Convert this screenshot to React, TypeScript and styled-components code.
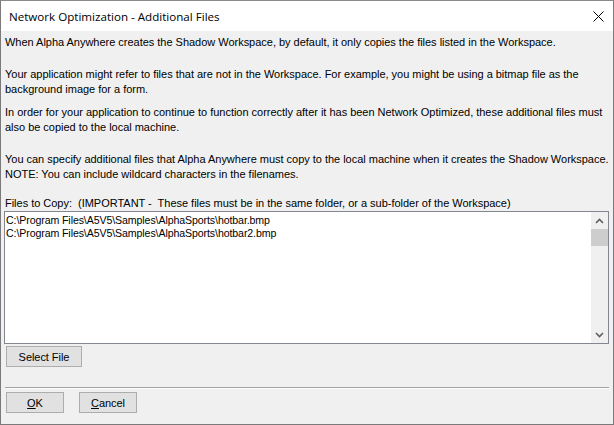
import React from "react";
import styled, { createGlobalStyle } from "styled-components";

const Global = createGlobalStyle`
  html, body { margin: 0; padding: 0; background: #ffffff; }
  * { box-sizing: border-box; }
`;

const Window = styled.div`
  width: 614px;
  height: 425px;
  border: 1px solid #7a7a7a;
  border-top-color: #8a8a8a;
  background: #f0f0f0;
  display: flex;
  flex-direction: column;
  font-family: "Liberation Sans", Arial, sans-serif;
  color: #000;
  overflow: hidden;
`;

const TitleBar = styled.div`
  height: 30px;
  background: #ffffff;
  display: flex;
  align-items: center;
  justify-content: space-between;
  padding: 0 0 0 8px;
  font-family: "Open Sans", "Noto Sans", sans-serif;
  font-size: 11.6px;
  flex-shrink: 0;
`;

const CloseBtn = styled.div`
  width: 30px;
  height: 30px;
  display: flex;
  align-items: center;
  justify-content: center;
`;

const Body = styled.div`
  flex: 1;
  display: flex;
  flex-direction: column;
  padding: 4px 4px 0 3px;
`;

const Para = styled.p<{ $mt: number }>`
  margin: ${(p) => p.$mt}px 0 0 1px;
  font-size: 11px;
  line-height: 15px;
  letter-spacing: -0.02px;
  white-space: nowrap;
`;

const ListBox = styled.div`
  margin-top: 0;
  height: 133px;
  border: 1px solid #828790;
  background: #fff;
  display: flex;
  flex-shrink: 0;
`;

const ListItems = styled.div`
  flex: 1;
  padding: 2px 1px;
  font-size: 10.6px;
  line-height: 13px;
  letter-spacing: -0.1px;
  white-space: nowrap;
`;

const ScrollBar = styled.div`
  width: 17px;
  background: #f0f0f0;
  display: flex;
  flex-direction: column;
  align-items: stretch;
`;

const Arrow = styled.div`
  height: 17px;
  display: flex;
  align-items: center;
  justify-content: center;
`;

const Thumb = styled.div`
  height: 17px;
  background: #cdcdcd;
`;

const Track = styled.div`
  flex: 1;
`;

const Button = styled.button<{ $w: number }>`
  width: ${(p) => p.$w}px;
  height: 21px;
  border: 1px solid #adadad;
  background: #e1e1e1;
  font-family: "Liberation Sans", Arial, sans-serif;
  font-size: 11px;
  letter-spacing: -0.05px;
  color: #000;
  padding: 0;
  display: flex;
  align-items: center;
  justify-content: center;
`;

const SelectRow = styled.div`
  margin: 2px 0 0 2px;
  display: flex;
`;

const Separator = styled.div`
  margin: 20px 0 0 1px;
  height: 2px;
  border-top: 1px solid #a0a0a0;
  border-bottom: 1px solid #ffffff;
`;

const ButtonRow = styled.div`
  margin: 3px 0 0 2px;
  display: flex;
  gap: 15px;
`;

const U = styled.span`
  text-decoration: underline;
`;

export default function App() {
  return (
    <>
      <Global />
      <Window>
        <TitleBar>
          <span>Network Optimization - Additional Files</span>
          <CloseBtn>
            <svg width="11" height="11" viewBox="0 0 11 11">
              <path d="M0.5 0.5 L10.5 10.5 M10.5 0.5 L0.5 10.5" stroke="#000" strokeWidth="1" />
            </svg>
          </CloseBtn>
        </TitleBar>
        <Body>
          <Para $mt={0}>
            When Alpha Anywhere creates the Shadow Workspace, by default, it only copies the files listed in the Workspace.
          </Para>
          <Para $mt={17}>
            Your application might refer to files that are not in the Workspace. For example, you might be using a bitmap file as the
            <br />
            background image for a form.
          </Para>
          <Para $mt={8}>
            In order for your application to continue to function correctly after it has been Network Optimized, these additional files must
            <br />
            also be copied to the local machine.
          </Para>
          <Para $mt={17}>
            You can specify additional files that Alpha Anywhere must copy to the local machine when it creates the Shadow Workspace.
            <br />
            NOTE: You can include wildcard characters in the filenames.
          </Para>
          <Para $mt={14}>
            Files to Copy:&nbsp; (IMPORTANT -&nbsp; These files must be in the same folder, or a sub-folder of the Workspace)
          </Para>
          <ListBox>
            <ListItems>
              <div>C:\Program Files\A5V5\Samples\AlphaSports\hotbar.bmp</div>
              <div>C:\Program Files\A5V5\Samples\AlphaSports\hotbar2.bmp</div>
            </ListItems>
            <ScrollBar>
              <Arrow>
                <svg width="9" height="6" viewBox="0 0 9 6">
                  <path d="M1 5 L4.5 1.5 L8 5" stroke="#606060" strokeWidth="1.6" fill="none" />
                </svg>
              </Arrow>
              <Thumb />
              <Track />
              <Arrow>
                <svg width="9" height="6" viewBox="0 0 9 6">
                  <path d="M1 1 L4.5 4.5 L8 1" stroke="#606060" strokeWidth="1.6" fill="none" />
                </svg>
              </Arrow>
            </ScrollBar>
          </ListBox>
          <SelectRow>
            <Button $w={76}>Select File</Button>
          </SelectRow>
          <Separator />
          <ButtonRow>
            <Button $w={58}>
              <span><U>O</U>K</span>
            </Button>
            <Button $w={58}>
              <span><U>C</U>ancel</span>
            </Button>
          </ButtonRow>
        </Body>
      </Window>
    </>
  );
}
